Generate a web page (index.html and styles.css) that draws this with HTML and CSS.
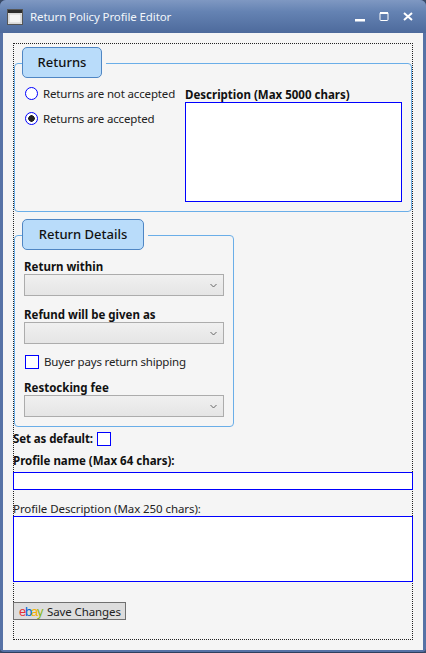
FILE: index.html
```html
<!DOCTYPE html>
<html lang="en">

<head>
    <meta charset="UTF-8">
    <title>Return Policy Profile Editor</title>
    <link rel="stylesheet" href="styles.css">
</head>

<body>
    <div class="window">
        <div class="titlebar">
            <svg class="app-icon" width="16" height="16" viewBox="0 0 16 16">
                <rect x="0.5" y="0.5" width="15" height="15" fill="#e8e8e8" stroke="#555"/>
                <rect x="1" y="1" width="14" height="3" fill="#2c2c2c"/>
                <rect x="2" y="5" width="12" height="9" fill="#f4f4f4" stroke="#aaa" stroke-width="0.5"/>
            </svg>
            <span class="title">Return Policy Profile Editor</span>
            <div class="controls">
                <svg width="12" height="12" viewBox="0 0 12 12"><rect x="1" y="8" width="10" height="2.5" fill="#fff"/></svg>
                <svg width="12" height="12" viewBox="0 0 12 12"><rect x="2" y="1.5" width="8" height="8" rx="1" fill="none" stroke="#fff" stroke-width="1"/><rect x="2" y="1" width="8" height="2" fill="#fff"/></svg>
                <svg width="12" height="12" viewBox="0 0 12 12"><path d="M2 2 L10 9 M10 2 L2 9" stroke="#fff" stroke-width="2"/></svg>
            </div>
        </div>
        <div class="client">
            <div class="frame">
                <div class="tab tab-returns">Returns</div>
                <div class="group returns">
                    <div class="radios">
                        <div class="radio-row"><span class="radio"></span>Returns are not accepted</div>
                        <div class="radio-row"><span class="radio on"></span>Returns are accepted</div>
                    </div>
                    <div class="desc">
                        <div class="label">Description (Max 5000 chars)</div>
                        <div class="box desc-box"></div>
                    </div>
                </div>

                <div class="tab tab-details">Return Details</div>
                <div class="group details">
                    <div class="label">Return within</div>
                    <div class="select"><svg width="7" height="5" viewBox="0 0 7 5"><path d="M0.5 1 L3.5 4 L6.5 1" fill="none" stroke="#666"/></svg></div>
                    <div class="label label-gap">Refund will be given as</div>
                    <div class="select"><svg width="7" height="5" viewBox="0 0 7 5"><path d="M0.5 1 L3.5 4 L6.5 1" fill="none" stroke="#666"/></svg></div>
                    <div class="check-row"><span class="check"></span>Buyer pays return shipping</div>
                    <div class="label">Restocking fee</div>
                    <div class="select"><svg width="7" height="5" viewBox="0 0 7 5"><path d="M0.5 1 L3.5 4 L6.5 1" fill="none" stroke="#666"/></svg></div>
                </div>

                <div class="default-row"><span class="label">Set as default:</span><span class="check"></span></div>
                <div class="label name-label">Profile name (Max 64 chars):</div>
                <div class="box name-box"></div>
                <div class="plain-label">Profile Description (Max 250 chars):</div>
                <div class="box profile-box"></div>
                <div class="save"><span class="ebay"><i class="e">e</i><i class="b">b</i><i class="a">a</i><i class="y">y</i></span>Save Changes</div>
            </div>
        </div>
    </div>
</body>

</html>
```

FILE: styles.css
```css
* {
    box-sizing: border-box;
    margin: 0;
    padding: 0;
}

body {
    width: 426px;
    height: 653px;
    overflow: hidden;
    background: #3a4a66;
    font-family: "Noto Sans", sans-serif;
    font-size: 11.5px;
    color: #222;
}

.window {
    width: 426px;
    height: 653px;
    display: flex;
    flex-direction: column;
    padding: 0 3px 2px;
    background: #5672a6;
    border-radius: 6px 6px 4px 4px;
    border-bottom: 1px solid #2e3f5e;
}

.titlebar {
    height: 33px;
    margin: 0 -3px;
    padding: 0 12px 0 7px;
    display: flex;
    align-items: center;
    color: #f2f6fb;
    background: linear-gradient(#7f98c2, #6583b3 35%, #4d6a9c);
    border-radius: 6px 6px 0 0;
}

.app-icon {
    margin-right: 7px;
}

.title {
    font-size: 11.5px;
    letter-spacing: -0.1px;
}

.controls {
    margin-left: auto;
    display: flex;
    gap: 12px;
}

.client {
    flex: 1;
    padding: 10px;
    background: #f5f5f5;
}

.frame {
    height: 597px;
    border: 1px dotted #222;
}

.group {
    border: 1px solid #6aaee8;
    border-radius: 4px;
    padding: 0 9px;
}

.returns {
    display: flex;
    width: 398px;
    height: 149px;
    padding-top: 17px;
}

.details {
    width: 220px;
    height: 192px;
    padding-top: 24px;
}

/* the tab sits over the top border of its group */
.tab {
    position: relative;
    z-index: 1;
    height: 31px;
    margin: 0 0 -15px 8px;
    line-height: 29px;
    text-align: center;
    font-size: 13px;
    font-weight: 500;
    color: #111;
    background: #b9dcfa;
    border: 1px solid #4f86c4;
    border-radius: 5px;
    box-shadow: 4px 0 0 #f5f5f5;
}

.tab-returns {
    width: 80px;
    margin-top: 3px;
}

.tab-details {
    width: 122px;
    margin-top: 7px;
}

.radios {
    width: 161px;
}

.radio-row {
    display: flex;
    align-items: center;
    height: 25px;
    letter-spacing: -0.15px;
    white-space: nowrap;
}

.radio {
    width: 13px;
    height: 13px;
    margin: 0 5px 0 1px;
    border: 1px solid #00f;
    border-radius: 50%;
    background: #fff;
}

.radio.on {
    background: radial-gradient(circle, #222 3px, #fff 3.5px);
}

.desc {
    padding-top: 7px;
}

.label {
    font-weight: 700;
    font-size: 11.5px;
    line-height: 14px;
    color: #111;
    white-space: nowrap;
}

.box {
    border: 1px solid #00f;
    background: #fff;
}

.desc-box {
    width: 217px;
    height: 100px;
}

.select {
    width: 200px;
    height: 22px;
    display: flex;
    align-items: center;
    justify-content: flex-end;
    padding-right: 6px;
    border: 1px solid #acacac;
    background: linear-gradient(#f0f0f0, #e5e5e5);
}

.label-gap {
    margin-top: 12px;
}

.check-row {
    display: flex;
    align-items: center;
    height: 17px;
    margin: 9px 0 11px;
    letter-spacing: -0.18px;
}

.check {
    width: 14px;
    height: 14px;
    margin: 0 5px 0 1px;
    border: 1px solid #00f;
    background: #fff;
    display: inline-block;
}

.default-row {
    display: flex;
    align-items: center;
    height: 14px;
    margin: 5px 0 0 -1px;
    letter-spacing: -0.1px;
}

.default-row .check {
    margin-left: 4px;
}

.name-label {
    margin: 8px 0 0 -1px;
}

.name-box {
    width: 400px;
    height: 18px;
    margin: 4px -1px 0 -1px;
}

.plain-label {
    margin: 12px 0 0 -1px;
    line-height: 14px;
    letter-spacing: -0.08px;
}

.profile-box {
    width: 400px;
    height: 66px;
    margin: 0 -1px;
}

.save {
    width: 113px;
    height: 18px;
    margin: 20px 0 0 -1px;
    display: flex;
    align-items: center;
    padding-left: 5px;
    border: 1px solid #707070;
    background: #ddd;
    white-space: nowrap;
    letter-spacing: -0.1px;
}

.ebay {
    width: 28px;
    font-size: 13px;
    letter-spacing: -1.2px;
    font-family: "Liberation Sans", sans-serif;
}

.ebay i {
    font-style: normal;
}

.e { color: #e53238; }
.b { color: #0064d2; }
.a { color: #f5af02; }
.y { color: #86b817; }
```
